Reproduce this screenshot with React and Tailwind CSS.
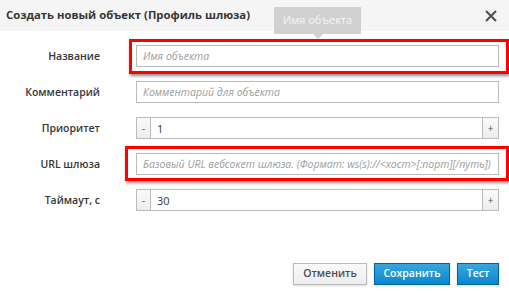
import React from 'react';

const font = { fontFamily: '"Open Sans", "Liberation Sans", sans-serif' };

function Label({ children }) {
  return (
    <div className="w-[100px] shrink-0 text-right text-[10.5px] font-semibold text-[#363636] leading-[22px]">
      {children}
    </div>
  );
}

function TextInput({ placeholder }) {
  return (
    <input
      type="text"
      placeholder={placeholder}
      className="w-[363px] h-[22px] border border-[#bbbbbb] bg-white px-[6px] text-[10.5px] text-[#363636] outline-none placeholder:italic placeholder:text-[#9c9c9c]"
    />
  );
}

function Stepper({ value }) {
  return (
    <div className="flex w-[363px] h-[22px]">
      <button className="w-[15px] h-[22px] border border-[#bbbbbb] bg-gradient-to-b from-[#fafafa] to-[#ededed] text-[10px] leading-none text-[#555]">
        -
      </button>
      <input
        type="text"
        defaultValue={value}
        className="flex-1 min-w-0 h-[22px] border-y border-[#bbbbbb] bg-white px-[6px] text-[11px] text-[#363636] outline-none"
      />
      <button className="w-[17px] h-[22px] border border-[#bbbbbb] bg-gradient-to-b from-[#fafafa] to-[#ededed] text-[10px] leading-none text-[#555]">
        +
      </button>
    </div>
  );
}

function Row({ label, children }) {
  return (
    <div className="flex items-center gap-[36px]">
      <Label>{label}</Label>
      {children}
    </div>
  );
}

export default function App() {
  return (
    <div style={font} className="relative w-[509px] h-[293px] overflow-hidden bg-white flex flex-col">
      <div className="h-[31px] shrink-0 bg-[#f5f5f5] flex items-center justify-between pl-[6px] pr-[12px]">
        <span className="text-[11.3px] font-bold text-[#363636]">Создать новый объект (Профиль шлюза)</span>
        <svg width="12" height="12" viewBox="0 0 12 12" className="mt-[1px]">
          <path d="M1 1 L11 11 M11 1 L1 11" stroke="#4d4d4d" strokeWidth="2" />
        </svg>
      </div>

      <div className="flex flex-col gap-[14px] pt-[14px]">
        <Row label="Название">
          <TextInput placeholder="Имя объекта" />
        </Row>
        <Row label="Комментарий">
          <TextInput placeholder="Комментарий для объекта" />
        </Row>
        <Row label="Приоритет">
          <Stepper value="1" />
        </Row>
        <Row label="URL шлюза">
          <TextInput placeholder="Базовый URL вебсокет шлюза. (Формат: ws(s)://<хост>[:порт][/путь])" />
        </Row>
        <Row label="Таймаут, с">
          <Stepper value="30" />
        </Row>
      </div>

      <div className="mt-auto mb-[8px] flex justify-end gap-[7px] pr-[10px]">
        <button className="h-[22px] w-[74px] border border-[#bbbbbb] bg-gradient-to-b from-[#fafafa] to-[#ededed] text-[10.5px] font-semibold text-[#4d4d4d] shadow-[0_1px_2px_rgba(0,0,0,0.15)]">
          Отменить
        </button>
        <button className="h-[22px] w-[76px] border border-[#00659c] bg-gradient-to-b from-[#39a5dc] to-[#0088ce] text-[10.5px] font-semibold text-white shadow-[0_1px_2px_rgba(0,0,0,0.15)]">
          Сохранить
        </button>
        <button className="h-[22px] w-[42px] border border-[#00659c] bg-gradient-to-b from-[#39a5dc] to-[#0088ce] text-[10.5px] font-semibold text-white shadow-[0_1px_2px_rgba(0,0,0,0.15)]">
          Тест
        </button>
      </div>

      {/* tooltip */}
      <div className="absolute left-[274px] top-[7px] w-[87px] h-[27px] bg-[#d1d1d1] flex items-center justify-center text-[11px] text-[#f5f5f5]">
        Имя объекта
        <div className="absolute left-[39px] top-[27px] w-0 h-0 border-x-[5px] border-x-transparent border-t-[5px] border-t-[#d1d1d1]" />
      </div>

      {/* red annotation boxes */}
      <div className="absolute left-[129px] top-[39px] w-[380px] h-[35px] border-[3px] border-[#ff0000] shadow-[1px_2px_3px_rgba(0,0,0,0.45)]" />
      <div className="absolute left-[125px] top-[146px] w-[384px] h-[35px] border-[3px] border-[#ff0000] shadow-[1px_2px_3px_rgba(0,0,0,0.45)]" />
    </div>
  );
}
